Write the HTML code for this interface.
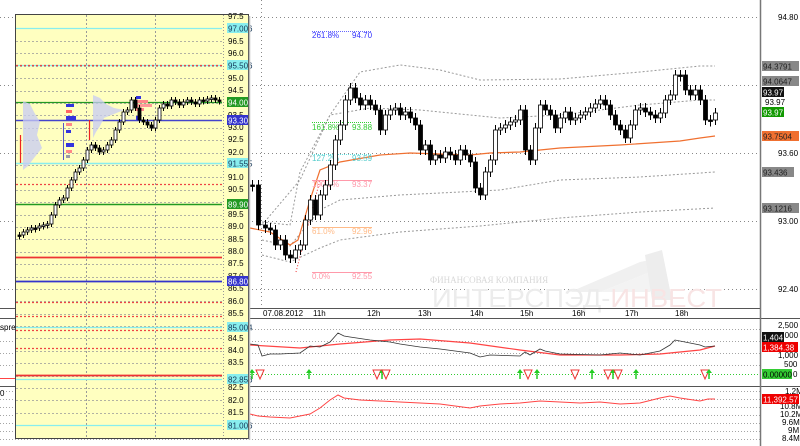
<!DOCTYPE html>
<html><head><meta charset="utf-8"><style>
html,body{margin:0;padding:0;background:#fff;width:800px;height:446px;overflow:hidden}
svg{display:block;font-family:"Liberation Sans",sans-serif}
</style></head><body>
<svg id="s" width="800" height="446" viewBox="0 0 800 446" xmlns="http://www.w3.org/2000/svg">
<rect width="800" height="446" fill="#fff"/>
<g stroke="#888" stroke-width="1" stroke-dasharray="1,3">
<line x1="0" y1="17.5" x2="760" y2="17.5"/><line x1="0" y1="85.5" x2="760" y2="85.5"/>
<line x1="0" y1="153.5" x2="760" y2="153.5"/><line x1="0" y1="221.5" x2="760" y2="221.5"/>
<line x1="0" y1="289.5" x2="760" y2="289.5"/>
<line x1="261.5" y1="0" x2="261.5" y2="308"/>
</g>
<g stroke="#888" stroke-dasharray="1,2" stroke-width="0.8">
<line x1="0" y1="329.5" x2="760" y2="329.5"/><line x1="0" y1="341.5" x2="760" y2="341.5"/><line x1="0" y1="353.5" x2="760" y2="353.5"/><line x1="0" y1="365.5" x2="760" y2="365.5"/>
<line x1="0" y1="391.5" x2="760" y2="391.5"/><line x1="0" y1="399.5" x2="760" y2="399.5"/><line x1="0" y1="407.5" x2="760" y2="407.5"/><line x1="0" y1="415.5" x2="760" y2="415.5"/><line x1="0" y1="423.5" x2="760" y2="423.5"/><line x1="0" y1="431.5" x2="760" y2="431.5"/><line x1="0" y1="439.5" x2="760" y2="439.5"/>
</g>
<!-- watermark -->
<polygon points="570,292 640,262 660,258 655,270 600,292" fill="#f0f0f0"/>
<polygon points="600,292 660,268 650,292" fill="#f3f3f3"/>
<polygon points="645,255 662,250 672,300 652,300" fill="#ededed"/>
<text x="430" y="283" font-family="Liberation Serif,serif" font-size="9" fill="#d8d8d8">ФИНАНСОВАЯ КОМПАНИЯ</text>
<text x="432" y="307" font-size="26" fill="#ececec" textLength="290" lengthAdjust="spacingAndGlyphs">ИНТЕРСПЭД-<tspan fill="#f8e4e4">ИНВЕСТ</tspan></text>
<g fill="none" stroke="#999" stroke-dasharray="2,2" stroke-width="1">
<polyline points="262,222 290,225 300,172 330,115 360,72 400,65 440,70 480,80 560,79 640,72 700,66 715,66"/>
<polyline points="262,225 300,180 330,115 370,108 420,110 500,118 560,115 640,105 700,100 715,100"/>
<polyline points="262,240 290,246 320,210 340,200 400,195 500,190 560,180 640,177 715,172"/>
<polyline points="262,255 290,262 320,248 340,240 400,232 480,226 560,218 640,212 715,208"/>
</g>
<polyline fill="none" stroke="#f07030" stroke-width="1.2" points="250,228 270,232 290,245 298,240 310,200 320,170 340,162 380,155 410,153 470,155 490,153 520,152 560,148 620,145 680,141 700,138 715,136"/>
<g stroke-width="1">
<line x1="312" y1="31.5" x2="372" y2="31.5" stroke="#66f" stroke-dasharray="1,1"/>
<line x1="312" y1="122.5" x2="372" y2="122.5" stroke="#3c3" stroke-dasharray="1,1"/>
<line x1="312" y1="154.5" x2="372" y2="154.5" stroke="#6dd" stroke-dasharray="1,1"/>
<line x1="312" y1="180.5" x2="372" y2="180.5" stroke="#f9a"/>
<line x1="312" y1="227.5" x2="372" y2="227.5" stroke="#fb8"/>
<line x1="312" y1="272.5" x2="372" y2="272.5" stroke="#f9a"/>
<line x1="296" y1="272" x2="320" y2="180" stroke="#e33" stroke-dasharray="1,2"/>
</g>
<g font-size="8">
<text x="312" y="38" fill="#33f">261.8%</text><text x="352" y="38" fill="#33f">94.70</text>
<text x="312" y="130" fill="#3c3">161.8%</text><text x="352" y="130" fill="#3c3">93.88</text>
<text x="312" y="161" fill="#5cc">127.2%</text><text x="352" y="161" fill="#5cc">93.59</text>
<text x="312" y="187" fill="#f9a">100.0%</text><text x="352" y="187" fill="#f9a">93.37</text>
<text x="312" y="234" fill="#fb8">61.0%</text><text x="352" y="234" fill="#fb8">92.96</text>
<text x="312" y="279" fill="#f9a">0.0%</text><text x="352" y="279" fill="#f9a">92.55</text>
</g>
<g id="mc"></g>
<line x1="0" y1="308.5" x2="760" y2="308.5" stroke="#555"/>
<line x1="0" y1="318.5" x2="800" y2="318.5" stroke="#555"/>
<line x1="0" y1="386.5" x2="800" y2="386.5" stroke="#555"/>
<line x1="760.5" y1="0" x2="760.5" y2="446" stroke="#777" stroke-width="1.5"/>
<g font-size="8" fill="#000">
<text x="263" y="316">07.08.2012</text><text x="313" y="316">11h</text><text x="367" y="316">12h</text><text x="418" y="316">13h</text><text x="470" y="316">14h</text><text x="520" y="316">15h</text><text x="572" y="316">16h</text><text x="625" y="316">17h</text><text x="675" y="316">18h</text>
</g>
<polyline fill="none" stroke="#f44" stroke-width="1.2" points="250,345 300,348 340,344 390,340 420,339 470,343 520,350 560,355 620,355 660,354 700,350 715,346"/>
<polyline fill="none" stroke="#333" stroke-width="0.8" points="250,344 258,345 262,356 270,354 280,354 300,353 310,346 320,347 330,342 338,333 344,336 350,337 370,340 390,342 400,344 420,347 440,349 470,353 480,357 490,355 520,356 525,352 530,355 540,349 545,351 560,354 600,355 620,353 640,355 660,351 670,345 675,340 690,343 700,345 705,347 715,346"/>
<line x1="250" y1="374.5" x2="760" y2="374.5" stroke="#3c3" stroke-dasharray="1,2"/>
<g id="arr"></g>
<polyline fill="none" stroke="#f44" stroke-width="1" points="250,414 258,416 270,417 290,418 300,416 310,414 320,408 330,400 338,395 344,398 360,400 380,401 400,402 420,403 440,404 470,408 480,406 500,404 520,403 540,401 560,402 580,403 600,402 620,404 640,403 660,398 670,396 680,398 700,401 708,399 715,399"/>
<g font-size="8" fill="#000">
<text x="778" y="20">94.80</text><text x="778" y="156">93.60</text><text x="778" y="224">93.00</text><text x="778" y="292">92.40</text>
<text x="765" y="105">93.97</text>
<text x="778" y="328">2,500</text><text x="778" y="338">2,000</text><text x="778" y="358">1,000</text><text x="784" y="367">500</text><text x="793" y="377">0</text>
<text x="785" y="394">1.2M</text><text x="780" y="409">10.8M</text><text x="780" y="417">10.2M</text><text x="782" y="425">9.6M</text><text x="788" y="433">9M</text><text x="782" y="441">8.4M</text>
</g>
<g font-size="8">
<rect x="762" y="61" width="37" height="10" fill="#888"/><text x="763" y="69.5" fill="#222">94.3791</text>
<rect x="762" y="76" width="37" height="10" fill="#888"/><text x="763" y="84.5" fill="#222">94.0647</text>
<rect x="762" y="87" width="22" height="10" fill="#111"/><text x="763" y="95.5" fill="#fff">93.97</text>
<rect x="762" y="107" width="22" height="10" fill="#190"/><text x="763" y="115.5" fill="#fff">93.97</text>
<rect x="762" y="131" width="37" height="10" fill="#f07030"/><text x="763" y="139.5" fill="#222">93.7504</text>
<rect x="762" y="167" width="32" height="10" fill="#888"/><text x="763" y="175.5" fill="#222">93.436</text>
<rect x="762" y="203" width="37" height="10" fill="#888"/><text x="763" y="211.5" fill="#222">93.1216</text>
<rect x="762" y="332" width="22" height="10" fill="#111"/><text x="763" y="340.5" fill="#fff">1,404</text>
<rect x="762" y="342" width="36" height="10" fill="#e00"/><text x="763" y="350.5" fill="#fff">1,384.38</text>
<rect x="762" y="369" width="30" height="10" fill="#3c3"/><text x="763" y="377.5" fill="#000">0.00000</text>
<rect x="762" y="394" width="37" height="10" fill="#e00"/><text x="763" y="402.5" fill="#fff">11,392.57</text>
</g>
<text x="0" y="330" font-size="8">spre</text><text x="0" y="396" font-size="8">0</text>
<line x1="0" y1="378.5" x2="16" y2="378.5" stroke="#f44"/>
<!-- floating window -->
<rect x="15.5" y="14.5" width="233" height="424" fill="#ffffc0" stroke="#444"/>
<g stroke="#999" stroke-dasharray="2,2" stroke-width="0.8" id="pg"></g>
<line x1="86.5" y1="15" x2="86.5" y2="438" stroke="#999" stroke-dasharray="2,2"/>
<line x1="155.5" y1="15" x2="155.5" y2="438" stroke="#999" stroke-dasharray="2,2"/>
<line x1="223.5" y1="15" x2="223.5" y2="438" stroke="#999" stroke-dasharray="1,2"/>
<g stroke-width="1.2">
<line x1="16" y1="28.5" x2="222" y2="28.5" stroke="#8ee"/>
<line x1="16" y1="65.5" x2="222" y2="65.5" stroke="#8ee"/>
<line x1="16" y1="65.5" x2="222" y2="65.5" stroke="#e44" stroke-dasharray="2,2"/>
<line x1="16" y1="102.5" x2="222" y2="102.5" stroke="#292"/>
<line x1="16" y1="120.5" x2="222" y2="120.5" stroke="#44c" stroke-width="1.5"/>
<line x1="16" y1="163.5" x2="222" y2="163.5" stroke="#8ee" stroke-width="1.5"/>
<line x1="16" y1="184.5" x2="222" y2="184.5" stroke="#e44" stroke-dasharray="2,2"/>
<line x1="16" y1="204.5" x2="222" y2="204.5" stroke="#292" stroke-width="1.5"/>
<line x1="16" y1="257.5" x2="222" y2="257.5" stroke="#e33" stroke-width="1.8"/>
<line x1="16" y1="281.5" x2="222" y2="281.5" stroke="#33c" stroke-width="1.8"/>
<line x1="16" y1="302.5" x2="222" y2="302.5" stroke="#e44" stroke-dasharray="2,2"/>
<line x1="16" y1="316.5" x2="222" y2="316.5" stroke="#e44" stroke-dasharray="2,2"/>
<line x1="16" y1="327.5" x2="222" y2="327.5" stroke="#8ee"/>
<line x1="16" y1="330.5" x2="222" y2="330.5" stroke="#e44" stroke-dasharray="2,2"/>
<line x1="16" y1="348.5" x2="222" y2="348.5" stroke="#e44" stroke-dasharray="2,2"/>
<line x1="16" y1="375.5" x2="222" y2="375.5" stroke="#e33" stroke-width="1.8"/>
<line x1="16" y1="379.5" x2="222" y2="379.5" stroke="#8ee"/>
<line x1="16" y1="425.5" x2="222" y2="425.5" stroke="#8ee"/>
</g>
<g fill="#c8ccf4" opacity="0.75">
<polygon points="23,101 30,104 34,112 40,122 37,135 42,148 34,158 28,166 23,170"/>
<polygon points="93,95 100,98 106,104 114,108 124,110 114,114 104,118 100,126 96,132 93,138"/>
</g>
<g><rect x="66" y="104" width="8" height="3" fill="#33d"/><rect x="66" y="110" width="6" height="3" fill="#f66"/><rect x="66" y="116" width="10" height="4" fill="#33d"/><rect x="66" y="123" width="6" height="3" fill="#f88"/><rect x="66" y="130" width="5" height="3" fill="#33d"/><rect x="66" y="143" width="8" height="4" fill="#33d"/><rect x="66" y="150" width="6" height="3" fill="#f88"/><rect x="66" y="155" width="4" height="3" fill="#99a"/>
<rect x="136" y="96" width="5" height="3" fill="#33d"/><rect x="136" y="100" width="12" height="3" fill="#f88"/><rect x="136" y="104" width="16" height="3" fill="#f99"/><rect x="136" y="108" width="8" height="3" fill="#f88"/><rect x="136" y="116" width="4" height="4" fill="#33d"/>
<line x1="20.5" y1="135" x2="20.5" y2="163" stroke="#e22" stroke-width="1.2"/><line x1="63.5" y1="123" x2="63.5" y2="160" stroke="#55c"/><line x1="89.5" y1="120" x2="89.5" y2="140" stroke="#e22" stroke-width="1.2"/></g>
<g id="pc"></g>
<g font-size="8" fill="#000">
<text x="228" y="19">97.5</text><text x="228" y="44">96.5</text><text x="228" y="56">96.0</text><text x="228" y="81">95.0</text><text x="228" y="93">94.5</text><text x="228" y="118">93.5</text><text x="228" y="130">93.0</text><text x="228" y="142">92.5</text><text x="228" y="155">92.0</text><text x="228" y="180">91.0</text><text x="228" y="192">90.5</text><text x="228" y="217">89.5</text><text x="228" y="229">89.0</text><text x="228" y="242">88.5</text><text x="228" y="254">88.0</text><text x="228" y="266">87.5</text><text x="228" y="279">87.0</text><text x="228" y="291">86.5</text><text x="228" y="304">86.0</text><text x="228" y="316">85.5</text><text x="228" y="341">84.5</text><text x="228" y="353">84.0</text><text x="228" y="365">83.5</text><text x="228" y="390">82.5</text><text x="228" y="403">82.0</text><text x="228" y="415">81.5</text>
</g>
<g font-size="8">
<rect x="227" y="23" width="21" height="10" fill="#8ee"/><text x="228" y="31.5" fill="#135">97.006</text>
<rect x="227" y="60" width="21" height="10" fill="#8ee"/><text x="228" y="68.5" fill="#135">95.506</text>
<rect x="227" y="97" width="21" height="10" fill="#292"/><text x="228" y="105.5" fill="#fff">94.008</text>
<rect x="227" y="115" width="21" height="10" fill="#33c"/><text x="228" y="123.5" fill="#fff">93.300</text>
<rect x="227" y="158" width="21" height="10" fill="#8ee"/><text x="228" y="166.5" fill="#135">91.555</text>
<rect x="227" y="199" width="21" height="10" fill="#292"/><text x="228" y="207.5" fill="#fff">89.908</text>
<rect x="227" y="276" width="21" height="10" fill="#33c"/><text x="228" y="284.5" fill="#fff">86.801</text>
<rect x="227" y="322" width="21" height="10" fill="#8ee"/><text x="228" y="330.5" fill="#135">85.004</text>
<rect x="227" y="374" width="21" height="10" fill="#8ee"/><text x="228" y="382.5" fill="#135">82.856</text>
<rect x="227" y="420" width="21" height="10" fill="#8ee"/><text x="228" y="428.5" fill="#135">81.006</text>
</g>
<rect x="15.5" y="14.5" width="233" height="424" fill="none" stroke="#444"/>
<line x1="249.5" y1="16" x2="249.5" y2="440" stroke="#bbb" stroke-width="1.5"/>
</svg>
<script>
var NS="http://www.w3.org/2000/svg";
function el(p,t,a){var e=document.createElementNS(NS,t);for(var k in a)e.setAttribute(k,a[k]);p.appendChild(e);return e;}
function candles(g,pts,w,sp){var prev=pts[0][1];for(var i=0;i<pts.length;i++){var x=pts[i][0],c=pts[i][1],o=prev;var top=Math.min(o,c),bot=Math.max(o,c);if(bot-top<1.5){bot=top+1.5;}
el(g,"line",{x1:x+0.5,x2:x+0.5,y1:top-sp,y2:bot+sp,stroke:"#000","stroke-width":1});
el(g,"rect",{x:x-w/2+0.5,y:top,width:w,height:bot-top,fill:(c<o?"#fff":"#000"),stroke:"#000","stroke-width":0.8});prev=c;}}
var m=[[252,185],[258,225],[265,228],[270,230],[275,245],[280,240],[285,255],[290,258],[295,250],[300,245],[305,220],[310,200],[315,215],[320,195],[325,185],[330,165],[335,140],[340,125],[345,100],[350,88],[355,98],[360,105],[365,100],[370,105],[375,110],[380,130],[385,115],[390,110],[395,108],[400,115],[405,112],[410,118],[415,125],[420,150],[425,145],[430,160],[435,155],[440,158],[445,152],[450,155],[455,160],[460,150],[465,155],[470,162],[475,188],[480,195],[485,172],[490,160],[495,130],[500,128],[505,125],[510,122],[515,120],[520,110],[525,150],[530,160],[535,128],[540,105],[545,110],[550,115],[555,128],[560,118],[565,112],[570,120],[575,118],[580,115],[585,112],[590,108],[595,104],[600,100],[605,105],[610,115],[615,125],[620,130],[625,138],[630,125],[635,110],[640,108],[645,112],[650,115],[655,118],[660,113],[665,100],[670,95],[675,75],[680,75],[685,90],[690,95],[695,90],[700,100],[705,120],[710,120],[715,113]];
candles(document.getElementById("mc"),m,4,5);
var p=[[19,235],[23,232],[27,230],[31,228],[35,228],[39,226],[43,225],[47,224],[51,215],[55,205],[59,200],[63,198],[67,188],[71,180],[75,172],[79,168],[83,160],[87,150],[91,145],[95,148],[99,152],[103,150],[107,145],[111,140],[115,130],[119,122],[123,112],[127,110],[131,100],[135,108],[139,120],[143,122],[147,125],[151,128],[155,120],[159,108],[163,104],[167,106],[171,100],[175,102],[179,105],[183,102],[187,100],[191,102],[195,104],[199,100],[203,101],[207,99],[211,98],[215,100],[219,100]];
candles(document.getElementById("pc"),p,3,3);
var pg=document.getElementById("pg");for(var y=40.9;y<438;y+=12.4){el(pg,"line",{x1:16,x2:222,y1:Math.round(y)+0.5,y2:Math.round(y)+0.5});}
var ar=document.getElementById("arr");
[[252,"u"],[260,"d"],[309,"u"],[377,"d"],[382,"u"],[386,"d"],[520,"u"],[528,"d"],[537,"u"],[575,"d"],[592,"u"],[608,"d"],[613,"u"],[618,"d"],[636,"u"],[705,"d"],[709,"u"]].forEach(function(a){var x=a[0];if(a[1]=="u"){el(ar,"path",{d:"M"+x+" 369 L"+(x-3)+" 373 L"+(x+3)+" 373 Z",fill:"#2c2"});el(ar,"line",{x1:x,x2:x,y1:372,y2:379,stroke:"#2c2","stroke-width":1.5});}else{el(ar,"path",{d:"M"+(x-4)+" 370 L"+(x+4)+" 370 L"+x+" 379 Z",fill:"#fff",stroke:"#e33","stroke-width":1});}});
</script>
</body></html>
